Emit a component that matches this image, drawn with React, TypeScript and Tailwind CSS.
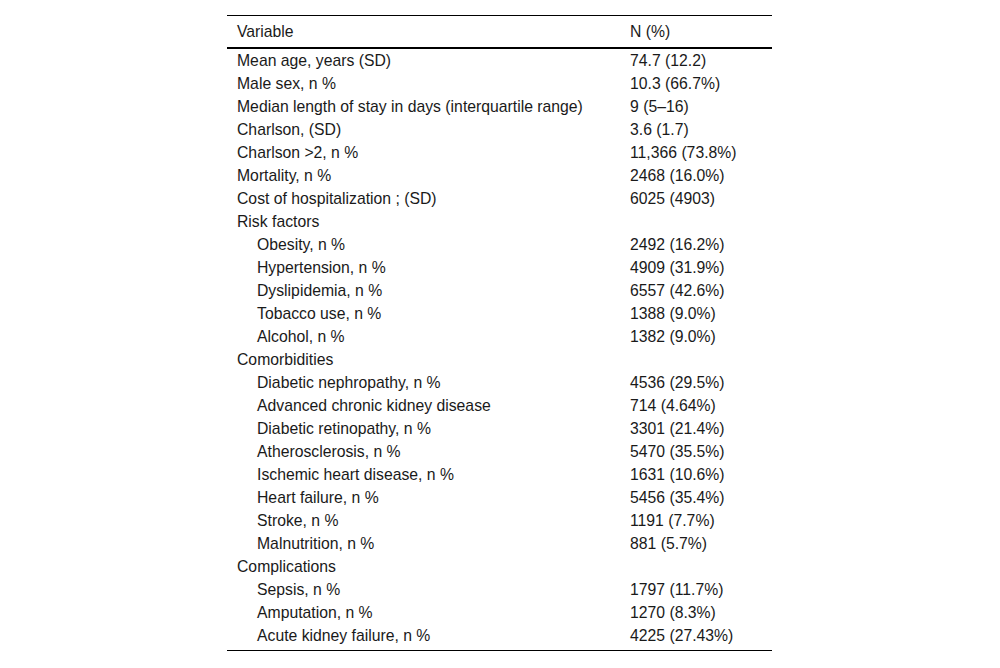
import React from "react";

type Row = { label: string; value: string; indent?: boolean };

const rows: Row[] = [
  { label: "Mean age, years (SD)", value: "74.7 (12.2)" },
  { label: "Male sex, n %", value: "10.3 (66.7%)" },
  { label: "Median length of stay in days (interquartile range)", value: "9 (5–16)" },
  { label: "Charlson, (SD)", value: "3.6 (1.7)" },
  { label: "Charlson >2, n %", value: "11,366 (73.8%)" },
  { label: "Mortality, n %", value: "2468 (16.0%)" },
  { label: "Cost of hospitalization ; (SD)", value: "6025 (4903)" },
  { label: "Risk factors", value: "" },
  { label: "Obesity, n %", value: "2492 (16.2%)", indent: true },
  { label: "Hypertension, n %", value: "4909 (31.9%)", indent: true },
  { label: "Dyslipidemia, n %", value: "6557 (42.6%)", indent: true },
  { label: "Tobacco use, n %", value: "1388 (9.0%)", indent: true },
  { label: "Alcohol, n %", value: "1382 (9.0%)", indent: true },
  { label: "Comorbidities", value: "" },
  { label: "Diabetic nephropathy, n %", value: "4536 (29.5%)", indent: true },
  { label: "Advanced chronic kidney disease", value: "714 (4.64%)", indent: true },
  { label: "Diabetic retinopathy, n %", value: "3301 (21.4%)", indent: true },
  { label: "Atherosclerosis, n %", value: "5470 (35.5%)", indent: true },
  { label: "Ischemic heart disease, n %", value: "1631 (10.6%)", indent: true },
  { label: "Heart failure, n %", value: "5456 (35.4%)", indent: true },
  { label: "Stroke, n %", value: "1191 (7.7%)", indent: true },
  { label: "Malnutrition, n %", value: "881 (5.7%)", indent: true },
  { label: "Complications", value: "" },
  { label: "Sepsis, n %", value: "1797 (11.7%)", indent: true },
  { label: "Amputation, n %", value: "1270 (8.3%)", indent: true },
  { label: "Acute kidney failure, n %", value: "4225 (27.43%)", indent: true },
];

export default function App() {
  return (
    <div
      className="w-[1000px] h-[668px] bg-white text-[#1a1a1a] text-[15.75px]"
      style={{ fontFamily: '"Liberation Sans", Arial, sans-serif' }}
    >
      <div className="pt-[15px] pl-[227px]">
        <div className="w-[545px] border-t border-b border-[#000]">
          <div className="flex h-[33px] items-center border-b-2 border-[#000]">
            <div className="w-[403px] pl-[10px]">Variable</div>
            <div>N (%)</div>
          </div>
          <div className="pb-[3px]">
            {rows.map((r, i) => (
              <div key={i} className="flex h-[23px] items-center">
                <div className={`w-[403px] ${r.indent ? "pl-[30px]" : "pl-[10px]"}`}>{r.label}</div>
                <div>{r.value}</div>
              </div>
            ))}
          </div>
        </div>
      </div>
    </div>
  );
}
